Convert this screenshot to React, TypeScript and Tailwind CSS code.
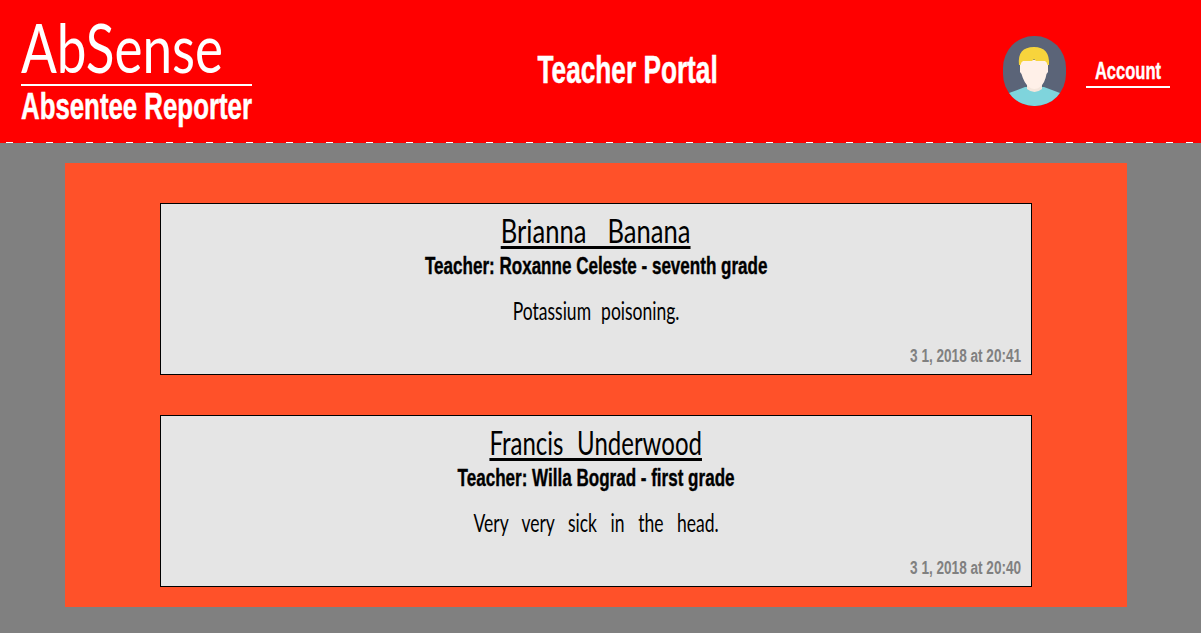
const cards = [
    { name: "Brianna Banana", nameClass: "[word-spacing:18px] scale-x-[0.8]", teacher: "Teacher: Roxanne Celeste - seventh grade", reason: "Potassium poisoning.", reasonSpace: "[word-spacing:8px]", time: "3 1, 2018 at 20:41" },
    { name: "Francis Underwood", nameClass: "[word-spacing:10px] scale-x-[0.75]", teacher: "Teacher: Willa Bograd - first grade", reason: "Very very sick in the head.", reasonSpace: "[word-spacing:13px]", time: "3 1, 2018 at 20:40" },
]

const condensed = "font-['Liberation_Sans',sans-serif] font-bold whitespace-nowrap"
const hand = "font-['Lato','Noto_Sans',sans-serif] font-normal whitespace-nowrap"

const Avatar = () => (
    <svg width="63" height="70" viewBox="0 0 63 70" className="block">
        <defs>
            <clipPath id="oval">
                <rect width="63" height="70" rx="31" ry="32" />
            </clipPath>
        </defs>
        <g clipPath="url(#oval)">
            <rect width="63" height="70" fill="#5b6478" />
            <path d="M0 61 L6 57 L22 51 H41 L57 57 L63 61 V70 H0 Z" fill="#7fd4dc" />
            <path d="M24 44 H39 V53 Q31.5 59 24 53 Z" fill="#f5e6dc" />
            <path d="M17 24 H45 V36 L43.5 38 Q42 47 37 51 Q31.5 55 26 51 Q21 47 18.5 38 L17 36 Z" fill="#fff0e8" />
            <path d="M16 29 Q14 11 31 11 Q47 11 46 29 L44.5 29 Q44 26 42 25 L33 25 L31 23 L29 25 L20 25 Q18 26 17.5 29 Z" fill="#f7d43c" />
        </g>
    </svg>
)

const Card = ({ name, nameClass, teacher, reason, reasonSpace, time }: { name: string; nameClass: string; teacher: string; reason: string; reasonSpace: string; time: string }) => (
    <div className="h-[172px] border border-black bg-[#e5e5e5] flex flex-col items-center">
        <h2 className={`${hand} ${nameClass} mt-[9px] text-[32px] leading-[36px] text-black underline decoration-[3px] underline-offset-[3px]`}>{name}</h2>
        <h3 className={`${condensed} mt-[2px] text-[24px] leading-[29px] text-black scale-x-[0.71] [-webkit-text-stroke:0.4px_black]`}>{teacher}</h3>
        <p className={`${hand} ${reasonSpace} mt-[16px] text-[25px] leading-[28px] text-black scale-x-[0.7]`}>{reason}</p>
        <span className={`${condensed} mt-auto mb-[7px] mr-[10px] self-end origin-right text-[18px] leading-[22px] text-[#808080] scale-x-[0.755]`}>{time}</span>
    </div>
)

export default function App() {
    return (
        <div className="min-h-[633px] bg-[#808080]">
            <header className="h-[143px] bg-[#ff0000] flex flex-col text-white">
                <div className="h-[142px] flex items-start">
                    <div className="ml-[21px] w-[231px] pt-[13px]">
                        <div className="h-[73px] border-b-2 border-white">
                            <div className={`${hand} origin-left text-[68px] leading-[68px] scale-x-[0.78]`}>AbSense</div>
                        </div>
                        <div className={`${condensed} mt-[2px] origin-left text-[36px] leading-[38px] scale-x-[0.717] [-webkit-text-stroke:0.5px_white]`}>Absentee Reporter</div>
                    </div>
                    <div className="flex-1 pt-[49px] flex justify-center">
                        <div className={`${condensed} text-[38px] leading-[42px] scale-x-[0.69] [-webkit-text-stroke:0.5px_white]`}>Teacher Portal</div>
                    </div>
                    <div className="mt-[36px]"><Avatar /></div>
                    <div className="ml-[20px] mr-[31px] mt-[56px] w-[84px] h-[32px] border-b-2 border-white flex justify-center">
                        <div className={`${condensed} text-[24px] leading-[30px] scale-x-[0.69] [-webkit-text-stroke:0.4px_white]`}>Account</div>
                    </div>
                </div>
                <div className="h-[1px] bg-[repeating-linear-gradient(90deg,#ff0000_0,#ff0000_6px,#ffffff_6px,#ffffff_13px,#ff0000_13px,#ff0000_20px)]" />
            </header>
            <main className="mx-[65px] mt-[20px] w-[1062px] bg-[#ff5129] px-[95px] pt-[40px] pb-[20px] flex flex-col gap-[40px]">
                {cards.map((card, index) => {
                    return <Card key={index} {...card} />
                })}
            </main>
        </div>
    )
}
